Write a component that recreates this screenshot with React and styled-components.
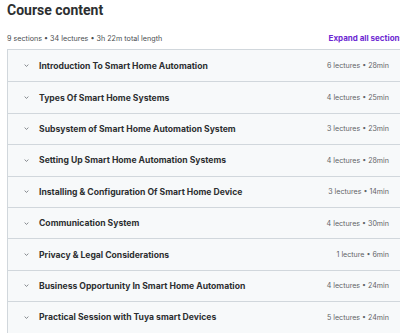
import React from "react";
import styled, { createGlobalStyle } from "styled-components";

const Global = createGlobalStyle`
  html, body { margin: 0; padding: 0; background: #ffffff; overflow: hidden; }
  body { font-family: Inter, "Noto Sans", sans-serif; color: #2d2f31; }
`;

const Page = styled.div`
  width: 397px;
  padding: 0 0 0 7px;
  box-sizing: content-box;
`;

const Title = styled.h2`
  margin: 0;
  font-family: Roboto, Inter, sans-serif;
  font-size: 14px;
  font-weight: 700;
  line-height: 21px;
  color: #2d2f31;
`;

const SummaryBar = styled.div`
  display: flex;
  justify-content: space-between;
  align-items: center;
  margin-top: 10px;
  height: 14px;
  margin-bottom: 4px;
`;

const Summary = styled.span`
  font-size: 7.2px;
  color: #4a4d50;
`;

const ExpandAll = styled.button`
  border: 0;
  background: none;
  padding: 0;
  font-family: inherit;
  font-size: 8px;
  font-weight: 700;
  color: #6d28d2;
  white-space: nowrap;
  cursor: pointer;
`;

const List = styled.div`
  border: 1px solid #d1d7dc;
  border-right: 0;
`;

const Row = styled.div`
  display: flex;
  align-items: center;
  height: 31.4px;
  box-sizing: border-box;
  padding: 0 15px 0 16px;
  background: #f7f9fa;
  border-top: ${(p) => (p.$first ? "0" : "1px solid #d1d7dc")};
`;

const Chevron = styled.svg`
  width: 5px;
  height: 5px;
  flex: none;
  margin-right: 10px;
`;

const SectionTitle = styled.span`
  flex: 1;
  font-size: 8.6px;
  font-weight: 700;
  color: #2d2f31;
  white-space: nowrap;
`;

const Meta = styled.span`
  font-size: 7.1px;
  color: #5f6366;
  white-space: nowrap;
`;

const sections = [
  ["Introduction To Smart Home Automation", "6 lectures • 28min"],
  ["Types Of Smart Home Systems", "4 lectures • 25min"],
  ["Subsystem of Smart Home Automation System", "3 lectures • 23min"],
  ["Setting Up Smart Home Automation Systems", "4 lectures • 28min"],
  ["Installing & Configuration Of Smart Home Device", "3 lectures • 14min"],
  ["Communication System", "4 lectures • 30min"],
  ["Privacy & Legal Considerations", "1 lecture • 6min"],
  ["Business Opportunity In Smart Home Automation", "4 lectures • 24min"],
  ["Practical Session with Tuya smart Devices", "5 lectures • 24min"],
];

export default function App() {
  return (
    <>
      <Global />
      <Page>
        <Title>Course content</Title>
        <SummaryBar>
          <Summary>9 sections • 34 lectures • 3h 22m total length</Summary>
          <ExpandAll>Expand all sections</ExpandAll>
        </SummaryBar>
        <List>
          {sections.map(([t, m], i) => (
            <Row key={t} $first={i === 0}>
              <Chevron viewBox="0 0 5 5">
                <path d="M0.6 1.6 L2.5 3.4 L4.4 1.6" fill="none" stroke="#6a6f73" strokeWidth="0.8" />
              </Chevron>
              <SectionTitle>{t}</SectionTitle>
              <Meta>{m}</Meta>
            </Row>
          ))}
        </List>
      </Page>
    </>
  );
}
